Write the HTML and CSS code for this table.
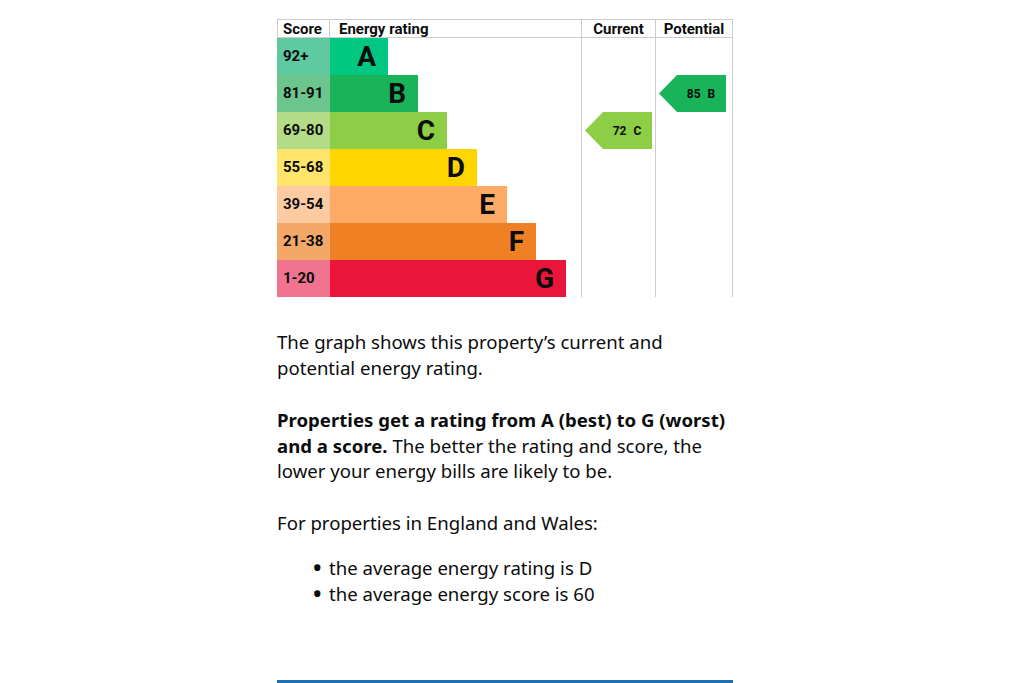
FILE: index.html
```html
<!DOCTYPE html>
<html lang="en">
<head>
<meta charset="utf-8">
<title>Energy rating</title>
<link rel="stylesheet" href="styles.css">
</head>
<body>
<main class="page">
  <div class="epc">
    <div class="epc-head">
      <div class="h-cell h-score">Score</div>
      <div class="h-cell h-rating">Energy rating</div>
      <div class="h-cell h-current">Current</div>
      <div class="h-cell h-potential">Potential</div>
    </div>
    <div class="epc-body">
      <div class="bands">
        <div class="band band-a"><span class="score">92+</span><span class="bar" style="width:58px">A</span></div>
        <div class="band band-b"><span class="score">81-91</span><span class="bar" style="width:88px">B</span></div>
        <div class="band band-c"><span class="score">69-80</span><span class="bar" style="width:117px">C</span></div>
        <div class="band band-d"><span class="score">55-68</span><span class="bar" style="width:147px">D</span></div>
        <div class="band band-e"><span class="score">39-54</span><span class="bar" style="width:177px">E</span></div>
        <div class="band band-f"><span class="score">21-38</span><span class="bar" style="width:206px">F</span></div>
        <div class="band band-g"><span class="score">1-20</span><span class="bar" style="width:236px">G</span></div>
      </div>
      <div class="col col-current">
        <div class="arrow arrow-c row-3"><span>72</span><span>C</span></div>
      </div>
      <div class="col col-potential">
        <div class="arrow arrow-b row-2"><span>85</span><span>B</span></div>
      </div>
    </div>
  </div>

  <p class="body-text body-first">The graph shows this property’s current and potential energy rating.</p>
  <p class="body-text"><strong>Properties get a rating from A (best) to G (worst) and a score.</strong> The better the rating and score, the lower your energy bills are likely to be.</p>
  <p class="body-text body-last">For properties in England and Wales:</p>
  <ul class="bullets">
    <li>the average energy rating is D</li>
    <li>the average energy score is 60</li>
  </ul>
  <div class="blue-rule"></div>
</main>
</body>
</html>
```

FILE: styles.css
```css
* { box-sizing: border-box; }
html, body { margin: 0; padding: 0; background: #ffffff; }
body { overflow: hidden; }

.page {
  width: 456px;
  margin-left: 277px;
  padding-top: 19px;
  color: #0b0c0c;
  font-family: "Noto Sans", "Open Sans", sans-serif;
}

/* ---------- EPC chart ---------- */
.epc { width: 456px; font-family: Roboto, "Liberation Sans", sans-serif; color: #0b0c0c; }

.epc-head {
  display: grid;
  grid-template-columns: 53px 251px 74px 78px;
  height: 19px;
  border-top: 1px solid #cccccc;
  border-bottom: 1px solid #cccccc;
}
.h-cell {
  font-size: 15px;
  font-weight: 700;
  line-height: 17px;
  padding-top: 1px;
  white-space: nowrap;
}
.h-score { border-left: 1px solid #cccccc; border-right: 1px solid #cccccc; padding-left: 5px; }
.h-rating { padding-left: 9px; }
.h-current { border-left: 1px solid #cccccc; text-align: center; }
.h-potential { border-left: 1px solid #cccccc; border-right: 1px solid #cccccc; text-align: center; }

.epc-body {
  display: grid;
  grid-template-columns: 304px 74px 78px;
}
.bands { display: flex; flex-direction: column; }
.band { display: flex; height: 37px; }
.score {
  width: 53px;
  flex: none;
  padding-left: 6px;
  font-size: 15px;
  font-weight: 700;
  line-height: 36px;
}
.bar {
  display: block;
  flex: none;
  text-align: right;
  padding-right: 12px;
  font-size: 28px;
  font-weight: 700;
  line-height: 37px;
}

.band-a .score { background: #5fc9a1; } .band-a .bar { background: #00c781; }
.band-b .score { background: #6cc58c; } .band-b .bar { background: #19b459; }
.band-c .score { background: #b4dc86; } .band-c .bar { background: #8dce46; }
.band-d .score { background: #fee46a; } .band-d .bar { background: #ffd500; }
.band-e .score { background: #fdcba2; } .band-e .bar { background: #fcaa65; }
.band-f .score { background: #f3a867; } .band-f .bar { background: #ef8023; }
.band-g .score { background: #f07490; } .band-g .bar { background: #e9153b; }

.col {
  display: grid;
  grid-template-rows: repeat(7, 37px);
  border-left: 1px solid #cccccc;
}
.col-current { padding-left: 3px; padding-right: 3px; }
.col-potential { border-right: 1px solid #cccccc; padding-left: 3px; padding-right: 6px; }

.row-2 { grid-row: 2; }
.row-3 { grid-row: 3; }

.arrow {
  display: flex;
  align-items: center;
  justify-content: center;
  gap: 7px;
  padding-left: 17px;
  height: 37px;
  font-size: 12px;
  font-weight: 700;
  color: #0b0c0c;
  clip-path: polygon(18px 0, 100% 0, 100% 100%, 18px 100%, 0 50%);
}
.arrow-c { background: #8dce46; }
.arrow-b { background: #19b459; }

/* ---------- Text ---------- */
.body-text {
  margin: 0 0 26px 0;
  font-size: 18.6px;
  line-height: 25.5px;
}
.body-first { margin-top: 32px; margin-bottom: 27px; }
.body-last { margin-bottom: 20px; }

.bullets {
  list-style: none;
  margin: 0;
  padding-left: 52px;
  font-size: 18.6px;
  line-height: 25.5px;
}
.bullets li::before {
  content: "•";
  display: inline-block;
  width: 17px;
  margin-left: -17px;
  font-size: 28px;
  line-height: 0;
  vertical-align: -3px;
}

.blue-rule {
  margin-top: 74px;
  height: 6px;
  background: #1f6fb2;
}
```
